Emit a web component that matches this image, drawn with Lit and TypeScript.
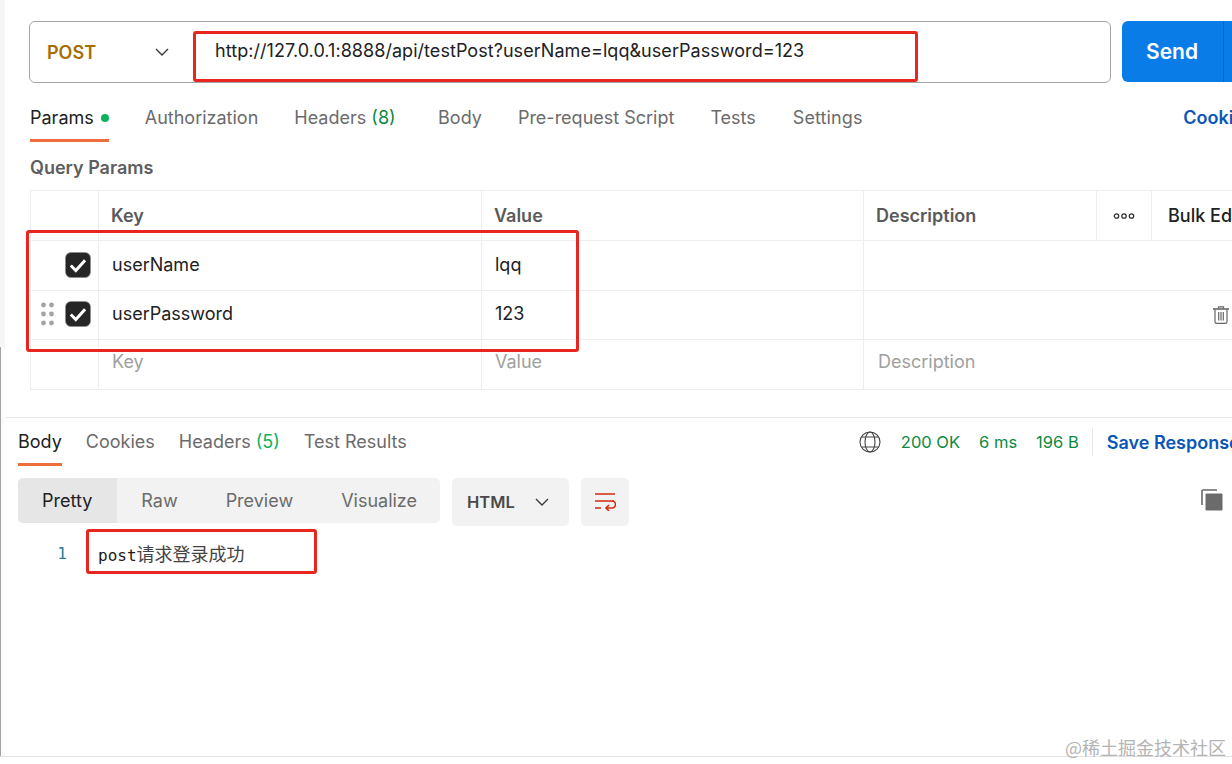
import { LitElement, html, css } from "lit";
import { customElement } from "lit/decorators.js";

const chevron = html`<svg class="chev" width="14" height="8" viewBox="0 0 14 8" fill="none" stroke="#3a3a3a" stroke-width="1.4"><path d="M1 1l6 6 6-6"/></svg>`;
const check = html`<svg width="26" height="26" viewBox="0 0 26 26"><rect x=".5" y=".5" width="25" height="25" rx="5.5" fill="#262626" stroke="#8a8a8a" stroke-width=".6"/><path d="M5.8 13.5l5 5 9.3-10.2" fill="none" stroke="#fff" stroke-width="3"/></svg>`;

@customElement("app-root")
export class AppRoot extends LitElement {
  static styles = css`
    :host { display: block; width: 1232px; height: 764px; position: relative; overflow: hidden; background: #fff; font-family: Inter, "Noto Sans CJK SC", sans-serif; font-size: 18px; color: #6b6b6b; }
    .page { display: flex; height: 756px; border-bottom: 1px solid #e2e2e2; }
    .rail { width: 5px; flex: none; display: flex; flex-direction: column; }
    .rail-top { height: 347px; background: #f6f6f6; }
    .rail-bot { flex: 1; background: #fbfbfb; border-left: 1px solid #a2a2a2; }
    .main { flex: 1; min-width: 0; display: flex; flex-direction: column; overflow: hidden; }
    .req { padding: 21px 0 0 24px; height: 417px; box-sizing: border-box; flex: none; }
    .urlrow { display: flex; gap: 11px; width: 1240px; }
    .urlbox { width: 1082px; height: 62px; box-sizing: border-box; border: 1px solid #a6a6a6; border-radius: 6px; display: flex; align-items: center; flex: none; }
    .method { width: 164px; flex: none; display: flex; align-items: center; justify-content: space-between; padding: 0 25px 0 17px; box-sizing: border-box; color: #a46f00; font-weight: 600; font-size: 18px; }
    .url { margin-left: 21px; color: #212121; font-size: 18px; letter-spacing: .05px; white-space: nowrap; transform: translateY(-2px); }
    .send { width: 130px; height: 61px; flex: none; background: #0a7ce8; border-radius: 6px 0 0 6px; color: #fff; font-weight: 600; font-size: 21px; display: flex; align-items: center; padding-left: 24px; box-sizing: border-box; }
    .send i { width: 1px; height: 61px; background: #0a66c2; margin-left: 25px; }
    .tabs { display: flex; align-items: flex-start; white-space: nowrap; }
    .reqtabs { margin: 24px 0 0 1px; height: 35px; width: 1224px; gap: 36px; }
    .tab { display: block; height: 100%; box-sizing: border-box; }
    .tab.on { color: #212121; box-shadow: inset 0 -3px 0 #ef6c3d; }
    .tab.gapl { margin-left: 6.5px; }
    .tab.gapr { margin-left: 1px; letter-spacing: .1px; }
    .green { color: #0a8a3f; }
    .green2 { color: #0cb25b; }
    .dot { display: inline-block; width: 8px; height: 8px; border-radius: 50%; background: #0cb25b; margin-left: 7px; vertical-align: 2px; }
    .spacer { flex: 1; }
    .link { color: #0a56b8; font-weight: 600; }
    .qp { margin: 15px 0 0 1px; font-weight: 600; color: #5e5e5e; font-size: 18px; line-height: 22px; }
    .grid { margin: 11px 0 0 1px; width: 1240px; display: grid; grid-template-columns: 68px 383px 382px 233px 55px 119px; border-top: 1px solid #ededed; border-left: 1px solid #ededed; box-sizing: border-box; }
    .c { border-right: 1px solid #ededed; border-bottom: 1px solid #ededed; height: 50px; box-sizing: border-box; display: flex; align-items: center; padding: 0 0 2px 13px; color: #212121; white-space: nowrap; }
    .c.h { color: #5a5a5a; font-weight: 600; height: 50px; padding: 0 0 0 12px; }
    .c.p { color: #a0a0a0; padding: 0 0 6px 13px; }
    .c.p.n { padding-left: 14px; }
    .c.r { height: 49px; padding-bottom: 4px; }
    .c.ck { padding: 0 7px 2px 0; justify-content: flex-end; gap: 11px; }
    .c.w { border-right: none; grid-column: span 2; justify-content: flex-end; padding: 0 42px 0 0; }
    .c.n { border-right: none; grid-column: span 3; }
    .c.nb { border-right: none; }
    .c.bulk { border-right: none; color: #212121; font-weight: 500; padding-left: 16px; }
    .c.m { justify-content: center; padding: 0; }
    .res { border-top: 1px solid #e8e8e8; margin-left: 1px; padding: 0 0 0 12px; flex: 1; }
    .restop { display: flex; height: 48px; width: 1230px; align-items: flex-start; }
    .restabs { margin-top: 13px; height: 35px; gap: 24px; flex: none; }
    .stats { margin-top: 12px; flex: none; white-space: nowrap; display: flex; align-items: center; color: #0a8a3f; font-size: 16.5px; height: 24px; margin-left: 452px; }
    .stats svg { margin-right: 20px; }
    .stats span { margin-right: 19px; }
    .stats .sep { width: 1px; height: 28px; background: #e8e8e8; margin: 0 14px 0 -6px; }
    .stats .link { color: #0a56b8; font-size: 18px; margin: 0; }
    .tools { margin-top: 12px; display: flex; align-items: flex-start; width: 1210px; }
    .seg { display: flex; height: 45px; width: 422px; background: #f2f2f2; border-radius: 5px; overflow: hidden; align-items: center; }
    .seg div { height: 100%; display: flex; align-items: center; padding: 0 24px; box-sizing: border-box; }
    .seg div.on { background: #e6e6e6; color: #212121; padding-right: 25px; }
    .lang { margin-left: 12px; height: 48px; width: 117px; box-sizing: border-box; background: #f2f2f2; border-radius: 5px; display: flex; align-items: center; padding: 0 20px 0 15px; justify-content: space-between; color: #4a4a4a; font-weight: 600; font-size: 16.5px; }
    .wrapbtn { margin-left: 12px; width: 48px; height: 48px; background: #f2f2f2; border-radius: 5px; display: flex; align-items: center; justify-content: center; }
    .copy { margin-left: auto; margin-top: 11px; margin-right: 5px; }
    .code { display: flex; margin-top: 15px; height: 24px; align-items: center; }
    .ln { width: 49px; text-align: right; color: #2a7f9e; font: 16px "DejaVu Sans Mono", monospace; }
    .txt { margin-left: 31px; font: 16px "DejaVu Sans Mono", monospace; color: #1a1a1a; white-space: nowrap; }
    .txt b { font-weight: 400; font-size: 18px; font-family: "Noto Sans CJK SC", sans-serif; color: #444; }
    .mark { position: absolute; border: 3px solid #e8261f; border-radius: 3px; box-sizing: border-box; pointer-events: none; }
    .m1 { left: 193px; top: 31px; width: 725px; height: 51px; }
    .m2 { left: 26px; top: 230px; width: 553px; height: 122px; }
    .m3 { left: 86px; top: 529px; width: 231px; height: 45px; }
    .wm { position: absolute; right: 6px; top: 736px; font-size: 18px; color: #b4b4b4; font-family: "Noto Sans CJK SC", sans-serif; white-space: nowrap; line-height: 22px; }
  `;

  render() {
    return html`
      <div class="page">
        <div class="rail"><div class="rail-top"></div><div class="rail-bot"></div></div>
        <div class="main">
          <section class="req">
            <div class="urlrow">
              <div class="urlbox">
                <div class="method">POST ${chevron}</div>
                <div class="url">http://127.0.0.1:8888/api/testPost?userName=lqq&userPassword=123</div>
              </div>
              <div class="send">Send<i></i></div>
            </div>
            <div class="tabs reqtabs">
              <div class="tab on">Params<span class="dot"></span></div>
              <div class="tab">Authorization</div>
              <div class="tab">Headers <span class="green">(8)</span></div>
              <div class="tab gapl">Body</div>
              <div class="tab">Pre-request Script</div>
              <div class="tab">Tests</div>
              <div class="tab gapr">Settings</div>
              <div class="spacer"></div>
              <div class="tab link">Cookies</div>
            </div>
            <div class="qp">Query Params</div>
            <div class="grid">
              <div class="c h"></div><div class="c h">Key</div><div class="c h">Value</div><div class="c h">Description</div>
              <div class="c h m"><svg width="22" height="6" viewBox="0 0 22 6" fill="none" stroke="#333" stroke-width="1.3"><circle cx="3.5" cy="3" r="2.2"/><circle cx="11" cy="3" r="2.2"/><circle cx="18.5" cy="3" r="2.2"/></svg></div>
              <div class="c h bulk">Bulk Edit</div>

              <div class="c ck">${check}</div><div class="c">userName</div><div class="c">lqq</div><div class="c n"></div>

              <div class="c r ck">
                <svg width="13" height="24" viewBox="0 0 13 24" fill="#a3a3a3"><circle cx="2.5" cy="3" r="2.4"/><circle cx="10.5" cy="3" r="2.4"/><circle cx="2.5" cy="12" r="2.4"/><circle cx="10.5" cy="12" r="2.4"/><circle cx="2.5" cy="21" r="2.4"/><circle cx="10.5" cy="21" r="2.4"/></svg>
                ${check}
              </div>
              <div class="c r">userPassword</div><div class="c r">123</div><div class="c r nb"></div>
              <div class="c r w">
                <svg width="16" height="18" viewBox="0 0 16 18" fill="none" stroke="#666" stroke-width="1.2"><path d="M0 3h16" stroke-width="1.6"/><path d="M5.5 2.2V.8h5v1.4"/><path d="M2 3.5v12.2c0 1 .7 1.7 1.7 1.7h8.6c1 0 1.7-.7 1.7-1.7V3.5"/><path d="M5.7 6v8.5M8 6v8.5M10.3 6v8.5"/></svg>
              </div>

              <div class="c"></div><div class="c p">Key</div><div class="c p">Value</div><div class="c p n">Description</div>
            </div>
          </section>
          <section class="res">
            <div class="restop">
              <div class="tabs restabs">
                <div class="tab on">Body</div>
                <div class="tab">Cookies</div>
                <div class="tab">Headers <span class="green2">(5)</span></div>
                <div class="tab">Test Results</div>
              </div>
              <div class="stats">
                <svg width="22" height="22" viewBox="0 0 22 22" fill="none" stroke="#444" stroke-width="1.1"><circle cx="11" cy="11" r="10"/><ellipse cx="11" cy="11" rx="5" ry="10"/><path d="M2.5 6h17M2.5 16h17"/></svg>
                <span>200 OK</span><span>6 ms</span><span>196 B</span><i class="sep"></i><span class="link">Save Response</span>
              </div>
            </div>
            <div class="tools">
              <div class="seg"><div class="on">Pretty</div><div>Raw</div><div>Preview</div><div>Visualize</div></div>
              <div class="lang">HTML ${chevron}</div>
              <div class="wrapbtn">
                <svg width="22" height="18" viewBox="0 0 22 18" fill="none" stroke="#cf2a10" stroke-width="1.6"><path d="M1 1h20M1 8h19M1 15h6"/><path d="M13 15h5a3 3 0 0 0 0-7"/><path d="M15 12l-3 3 3 3"/></svg>
              </div>
              <svg class="copy" width="22" height="22" viewBox="0 0 22 22"><path d="M1 16V2a1 1 0 0 1 1-1h14" fill="none" stroke="#666" stroke-width="1.6"/><rect x="4.5" y="4.5" width="17" height="17" rx="1" fill="#6b6b6b"/></svg>
            </div>
            <div class="code">
              <div class="ln">1</div>
              <div class="txt">post<b>请求登录成功</b></div>
            </div>
          </section>
        </div>
      </div>
      <div class="mark m1"></div>
      <div class="mark m2"></div>
      <div class="mark m3"></div>
      <div class="wm">@稀土掘金技术社区</div>
    `;
  }
}
